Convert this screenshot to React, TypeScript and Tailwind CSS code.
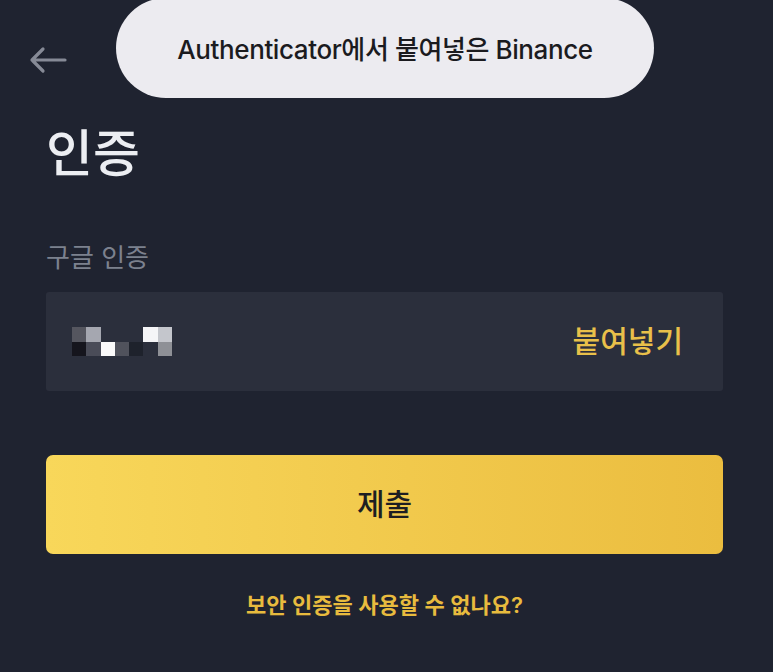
const pixels: string[][] = [
    ['#55565f', '#a5a7b0', 'transparent', 'transparent', 'transparent', '#f5f5f7', '#c4c6cc'],
    ['#15151d', '#4a4c58', '#fafafa', '#50525c', '#1e222c', 'transparent', '#8e9096'],
]

export default function App() {
    return (
        <div
            className="relative w-[773px] h-[672px] overflow-hidden bg-[#1f2330]"
            style={{ fontFamily: 'Inter, "Noto Sans CJK KR", sans-serif' }}
        >
            {/* 토스트 */}
            <div className="absolute left-[116px] top-[-2px] w-[538px] h-[100px] rounded-full bg-[#ecebf0] flex items-center justify-center">
                <span className="mt-[2px] text-[26px] font-medium text-[#1b1b1f] tracking-[-0.4px]">
                    Authenticator에서 붙여넣은 Binance
                </span>
            </div>

            <div className="pl-[46px] pr-[50px]">
                <div className="h-[128px] pt-[46px]">
                    <svg width="40" height="28" viewBox="0 0 40 28" className="-ml-[18px]">
                        <path
                            d="M37 14H4M15 3L4 14L15 25"
                            fill="none"
                            stroke="#868a96"
                            strokeWidth="3.2"
                            strokeLinecap="round"
                            strokeLinejoin="round"
                        />
                    </svg>
                </div>

                <h1 className="text-[51px] leading-none font-medium text-[#eceef2]">인증</h1>

                <p className="mt-[66px] text-[26px] leading-none text-[#7c818e]">구글 인증</p>

                <div className="mt-[21px] h-[99px] flex items-center bg-[#2b2f3c] rounded-[3px]">
                    <div className="ml-[26px] flex flex-col">
                        {pixels.map((row, i) => (
                            <div key={i} className="flex">
                                {row.map((c, j) => (
                                    <div key={j} className="w-[14.3px] h-[14.5px]" style={{ backgroundColor: c }} />
                                ))}
                            </div>
                        ))}
                    </div>
                    <span className="ml-auto mr-[40px] text-[30px] font-medium text-[#e9c04a]">붙여넣기</span>
                </div>

                <button className="mt-[64px] w-full h-[99px] rounded-[7px] bg-gradient-to-r from-[#f8d75a] to-[#ebbd3f] text-[30px] font-medium text-[#1e1e22]">
                    제출
                </button>

                <p className="mt-[35px] text-center text-[22px] font-semibold text-[#e8bb3e]">
                    보안 인증을 사용할 수 없나요?
                </p>
            </div>
        </div>
    )
}
